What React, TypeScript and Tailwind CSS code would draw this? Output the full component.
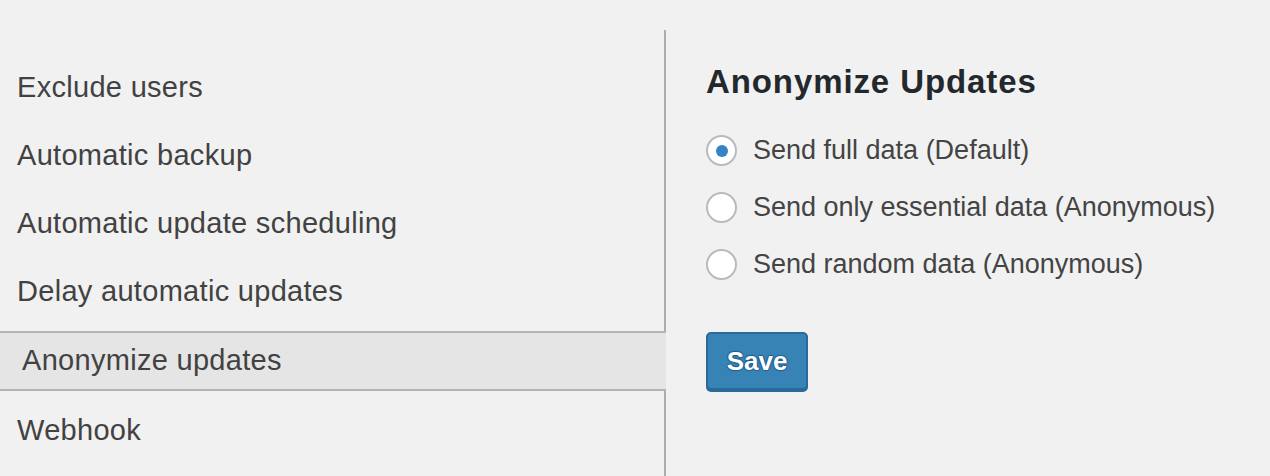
const menu = [
  "Exclude users",
  "Automatic backup",
  "Automatic update scheduling",
  "Delay automatic updates",
];

const options = [
  { label: "Send full data (Default)", checked: true },
  { label: "Send only essential data (Anonymous)", checked: false },
  { label: "Send random data (Anonymous)", checked: false },
];

function Radio({ checked }: { checked: boolean }) {
  return (
    <span className="flex h-[31px] w-[31px] shrink-0 items-center justify-center rounded-full border-2 border-[#b7bbbf] bg-white">
      {checked && <span className="h-[12px] w-[12px] rounded-full bg-[#3582c4]" />}
    </span>
  );
}

export default function App() {
  return (
    <div className="flex h-[476px] w-full overflow-hidden bg-[#f1f1f1] font-['Liberation_Sans',Arial,sans-serif]">
      <aside className="mt-[30px] flex w-[666px] shrink-0 flex-col border-r-2 border-[#adadad] pt-[24px]">
        {menu.map((item) => (
          <div key={item} className="flex h-[68px] items-center pl-[17px] text-[29px] tracking-[0.3px] text-[#424242]">
            {item}
          </div>
        ))}
        <div className="-mr-[2px] mt-[5px] flex h-[60px] items-center border-y-2 border-[#b3b3b3] bg-[#e5e5e5] pl-[22px] text-[29px] tracking-[0.3px] text-[#424242]">
          Anonymize updates
        </div>
        <div className="mt-[6px] flex h-[68px] items-center pl-[17px] text-[29px] tracking-[0.3px] text-[#424242]">
          Webhook
        </div>
      </aside>

      <main className="flex flex-col pl-[40px] pt-[62px]">
        <h2 className="text-[33px] font-bold leading-[40px] tracking-[0.9px] text-[#23282d]">
          Anonymize Updates
        </h2>
        <div className="mt-[20px] flex flex-col">
          {options.map((o) => (
            <label key={o.label} className="flex h-[57px] items-center gap-[16px] text-[27px] text-[#444]">
              <Radio checked={o.checked} />
              {o.label}
            </label>
          ))}
        </div>
        <button className="mt-[39px] h-[58px] w-[102px] rounded-[5px] border-2 border-[#2a6a9b] bg-[#3883b6] text-[26px] font-bold text-white shadow-[0_2px_0_#2a6a9b] [text-shadow:0_-1px_1px_#1f5d8c,1px_0_1px_#1f5d8c,0_1px_1px_#1f5d8c,-1px_0_1px_#1f5d8c]">
          Save
        </button>
      </main>
    </div>
  );
}
